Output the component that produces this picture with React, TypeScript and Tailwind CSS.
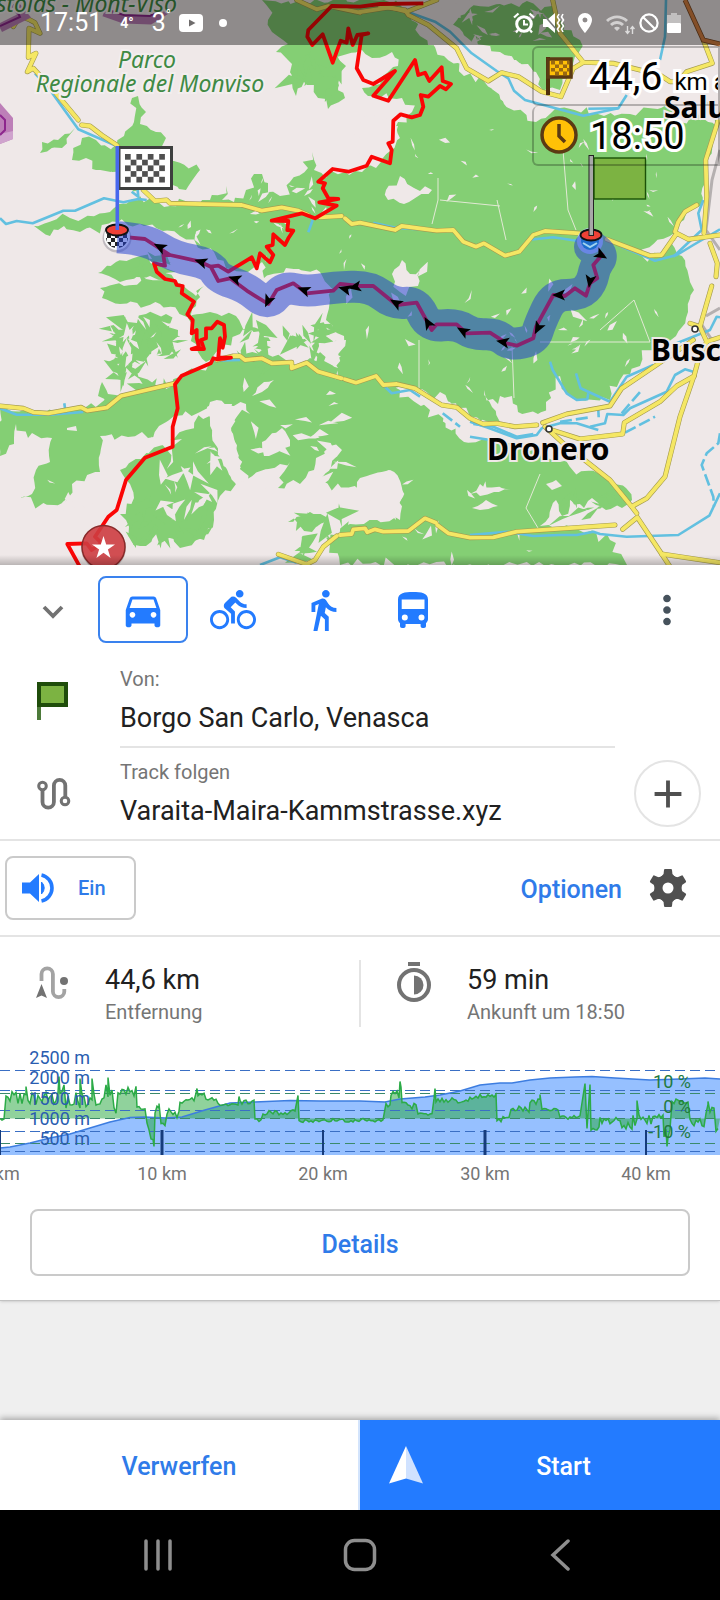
import React from "react";
import {
  MdAdd,
  MdDirectionsBike,
  MdDirectionsCar,
  MdDirectionsWalk,
  MdLocationOn,
  MdMoreVert,
  MdWifi,
} from "react-icons/md";

/* ---------- map geometry ---------- */

type Sheet = [number, number];
const NW: Sheet = [0, 0];
const NE: Sheet = [360, 0];
const SW: Sheet = [0, 280];
const SE: Sheet = [360, 280];

/** Converts survey units (three per map unit) of one sheet into map points. */
function points([ox, oy]: Sheet, c: number[]): [number, number][] {
  const out: [number, number][] = [];
  for (let i = 0; i < c.length; i += 2) out.push([ox + c[i] / 3, oy + c[i + 1] / 3]);
  return out;
}

function line(sheet: Sheet, c: number[]): string {
  return points(sheet, c).map(([x, y]) => `${x.toFixed(1)},${y.toFixed(1)}`).join(" ");
}

/** Path through the midpoints of a polyline, rounded at each corner. */
function smooth(sheet: Sheet, c: number[]): string {
  const p = points(sheet, c);
  let d = `M${p[0][0]} ${p[0][1]}`;
  for (let i = 1; i < p.length - 1; i++) {
    const mx = (p[i][0] + p[i + 1][0]) / 2;
    const my = (p[i][1] + p[i + 1][1]) / 2;
    d += `Q${p[i][0].toFixed(1)} ${p[i][1].toFixed(1)} ${mx.toFixed(1)} ${my.toFixed(1)}`;
  }
  const last = p[p.length - 1];
  return `${d}L${last[0]} ${last[1]}`;
}

function random(seed: number) {
  let s = seed;
  return () => {
    s = (s * 1664525 + 1013904223) % 4294967296;
    return s / 4294967296;
  };
}

/** Roughens the outline of a wood with uneven spikes. */
function ragged(c: number[], seed: number, amp = 5): string {
  const r = random(seed);
  const out: string[] = [];
  const n = c.length / 2;
  for (let i = 0; i < n; i++) {
    const x0 = c[i * 2];
    const y0 = c[i * 2 + 1];
    const x1 = c[((i + 1) % n) * 2];
    const y1 = c[((i + 1) % n) * 2 + 1];
    const len = Math.hypot(x1 - x0, y1 - y0);
    const steps = Math.max(1, Math.round(len / 6));
    for (let k = 0; k < steps; k++) {
      const t = (k + (k ? (r() - 0.5) * 0.8 : 0)) / steps;
      const spike = r() > 0.75 ? 1.9 : 0.8;
      const d = k === 0 ? 0 : (r() - 0.5) * 2 * amp * spike;
      const nx = len ? -(y1 - y0) / len : 0;
      const ny = len ? (x1 - x0) / len : 0;
      out.push(`${(x0 + (x1 - x0) * t + nx * d).toFixed(1)},${(y0 + (y1 - y0) * t + ny * d).toFixed(1)}`);
    }
  }
  return out.join(" ");
}

/** Narrow angular slivers scattered over a rectangle. */
function shards(x: number, y: number, w: number, h: number, n: number, size: number, seed: number): string {
  const r = random(seed);
  let d = "";
  for (let i = 0; i < n; i++) {
    const cx = x + r() * w;
    const cy = y + r() * h;
    const a = r() * Math.PI * 2;
    const l = size * (0.6 + r() * 1.3);
    const s = l * (0.15 + r() * 0.4);
    const p = (ang: number, rad: number) =>
      `${(cx + Math.cos(a + ang) * rad).toFixed(1)} ${(cy + Math.sin(a + ang) * rad).toFixed(1)}`;
    d += `M${p(0, l)}L${p(1.2 + r(), s)}L${p(3 + r() * 0.7, l * 0.8)}L${p(4.4, s * 0.5)}Z`;
  }
  return d;
}

const woods: number[][] = [
  [262, 0, 268, 20, 272, 32, 288, 44, 276, 52, 292, 64, 296, 96, 304, 82, 318, 98, 328, 109, 345, 98, 338, 84, 346, 66, 330, 56, 362, 50, 372, 58, 392, 52, 398, 66, 380, 84, 362, 88, 368, 96, 402, 98, 412, 112, 398, 122, 400, 138, 378, 160, 362, 172, 345, 172, 326, 178, 314, 170, 312, 152, 308, 168, 290, 182, 280, 196, 268, 192, 262, 174, 254, 174, 246, 190, 234, 202, 222, 200, 226, 186, 210, 200, 170, 206, 140, 196, 110, 212, 70, 218, 34, 226, 50, 236, 64, 226, 80, 232, 118, 222, 140, 224, 180, 236, 214, 252, 226, 268, 248, 272, 262, 262, 264, 278, 286, 268, 320, 272, 330, 300, 326, 320, 344, 336, 330, 346, 338, 368, 310, 358, 290, 362, 262, 350, 236, 358, 214, 358, 182, 376, 172, 386, 120, 396, 80, 410, 30, 412, 0, 408, 0, 456, 14, 444, 16, 424, 28, 438, 52, 438, 50, 462, 36, 470, 32, 494, 20, 498, 54, 505, 68, 498, 72, 484, 100, 472, 100, 436, 128, 437, 142, 432, 148, 438, 174, 416, 200, 412, 210, 402, 246, 404, 250, 414, 232, 424, 236, 448, 242, 480, 280, 464, 290, 462, 278, 488, 300, 484, 314, 470, 330, 446, 342, 450, 320, 480, 360, 490, 384, 484, 388, 470, 402, 490, 400, 520, 350, 524, 330, 544, 340, 565, 627, 565, 610, 540, 596, 532, 540, 526, 556, 500, 562, 516, 570, 498, 584, 508, 592, 498, 606, 510, 622, 508, 632, 500, 626, 488, 600, 474, 560, 462, 524, 444, 486, 438, 464, 440, 430, 410, 400, 390, 380, 384, 440, 392, 480, 420, 500, 424, 506, 400, 514, 424, 538, 424, 546, 402, 560, 376, 572, 398, 610, 400, 620, 380, 640, 366, 654, 344, 676, 336, 688, 312, 694, 290, 690, 282, 682, 256, 672, 244, 660, 256, 640, 254, 670, 236, 684, 220, 702, 206, 704, 176, 712, 140, 716, 126, 690, 118, 676, 124, 668, 104, 648, 108, 630, 114, 604, 116, 560, 108, 536, 122, 504, 104, 486, 82, 464, 76, 444, 56, 420, 36, 408, 12, 384, 0],
  [452, 26, 470, 8, 500, 4, 552, 6, 560, 20, 580, 40, 572, 72, 560, 90, 540, 92, 528, 64, 516, 60, 500, 56, 482, 58, 466, 44],
  [112, 148, 124, 136, 134, 122, 132, 98, 138, 96, 146, 112, 140, 124, 156, 132, 166, 138, 162, 158, 200, 170, 186, 190, 170, 184, 140, 190, 112, 172],
  [40, 153, 42, 142, 58, 140, 75, 128, 62, 148],
  [72, 160, 82, 138, 96, 140, 112, 150, 116, 170, 96, 170, 86, 158],
  [100, 288, 124, 286, 142, 280, 170, 280, 196, 296, 204, 286, 196, 306, 190, 318, 160, 304, 120, 304, 102, 298],
  [98, 273, 116, 262, 140, 256, 158, 266, 176, 282, 150, 276, 120, 282],
  [128, 322, 146, 314, 166, 314, 178, 330, 172, 346, 178, 358, 150, 354, 132, 364, 108, 362, 118, 350, 112, 336, 128, 334],
  [188, 318, 210, 312, 236, 316, 240, 334, 222, 344, 206, 362, 196, 344],
  [98, 396, 102, 382, 108, 394, 120, 396, 108, 406],
  [120, 470, 170, 440, 186, 430, 214, 412, 212, 436, 224, 464, 236, 484, 220, 496, 214, 520, 204, 540, 180, 548, 160, 530, 146, 546, 132, 540, 126, 520, 120, 514, 134, 498, 130, 484],
  [288, 522, 310, 512, 328, 518, 312, 532],
];

const roads: string[] = [
  line(NW, [40, 80, 60, 48, 90, 60, 105, 68, 120, 100, 87, 85, 85, 172, 108, 160, 82, 215, 100, 205, 160, 270, 235, 360]),
  line(NW, [245, 375, 270, 378, 305, 405, 350, 435, 400, 510, 430, 570, 465, 603, 500, 600, 510, 610, 725, 615, 785, 632, 845, 622, 895, 632, 925, 645]),
  line(NW, [960, 652, 1025, 648]),
  line(NW, [1035, 655, 1055, 672, 1080, 668, 1185, 690, 1205, 678, 1310, 692, 1360, 690, 1390, 725, 1428, 740, 1452, 730, 1515, 767, 1558, 755, 1600, 705, 1635, 693, 1740, 700]),
  line(NW, [890, 0, 950, 28, 985, 18, 1080, 38]),
  line(NE, [0, 36, 90, 22, 140, 35, 230, 0]),
  line(NE, [60, 20, 135, 30, 145, 45, 205, 75, 290, 145, 320, 205, 385, 243, 425, 218, 475, 230, 545, 275, 603, 290, 640, 205, 670, 187]),
  line(NE, [578, 0, 600, 100, 670, 187, 760, 190, 900, 225, 930, 245, 955, 245, 980, 215, 1057, 190, 1030, 120]),
  line(NE, [740, 718, 870, 767, 905, 765, 950, 700, 985, 718, 1080, 705]),
  line(NE, [945, 695, 955, 665, 975, 635, 1010, 615]),
  line(NE, [1075, 360, 1037, 480, 1040, 590, 1032, 700]),
  line(NE, [1050, 730, 1072, 790, 1068, 830]),
  line(SW, [0, 378, 70, 385, 100, 397, 145, 400, 243, 382, 262, 392, 320, 383, 363, 348, 525, 310]),
  line(SW, [650, 240, 700, 228, 720, 228, 735, 240, 785, 235, 815, 250, 875, 247, 875, 265, 920, 248, 955, 275, 1025, 295]),
  line(SW, [1035, 298, 1068, 308, 1128, 288, 1150, 315, 1190, 312, 1245, 325, 1325, 375, 1370, 382, 1410, 415, 1450, 432, 1490, 430, 1545, 440, 1610, 435]),
  line(SW, [835, 823, 920, 853, 945, 840, 970, 800, 1010, 768]),
  line(SW, [1020, 765, 1055, 762, 1060, 748, 1095, 745, 1102, 757, 1125, 748, 1150, 755, 1225, 753, 1275, 715, 1308, 728]),
  line(SE, [548, 428, 620, 402, 750, 378, 785, 325, 885, 258, 1000, 180]),
  line(SE, [555, 440, 610, 490, 750, 600, 815, 680, 830, 700]),
  line(SE, [560, 445, 660, 477, 788, 462, 793, 428, 900, 365, 950, 318, 1003, 288]),
  line(SE, [1055, 18, 1020, 140, 1040, 185, 1015, 240, 1003, 285, 960, 410, 915, 590, 860, 655, 820, 677]),
  line(SE, [1040, 185, 1080, 172]),
  line(SE, [990, 130, 1020, 140]),
  line(SE, [232, 735, 265, 760, 330, 773, 400, 772, 470, 755, 765, 735]),
  line(SE, [788, 748, 832, 712, 905, 822, 930, 860]),
  line(SE, [905, 822, 1080, 848]),
];

const rivers: string[] = [
  line(NW, [0, 655, 18, 672, 50, 663, 98, 670, 190, 632, 225, 632, 312, 595, 370, 607, 415, 597, 440, 600]),
  line(NW, [395, 575, 415, 590, 412, 560]),
  line(NW, [105, 220, 150, 270, 235, 388, 350, 438]),
  line(NW, [925, 697, 938, 660]),
  line(NE, [150, 38, 225, 65, 270, 95, 335, 160, 410, 213, 445, 235, 462, 272, 495, 300, 670, 347, 775, 325, 800, 285]),
  line(NE, [685, 326, 775, 325]),
  line(NE, [918, 0, 915, 110, 900, 180]),
  line(NE, [500, 720, 580, 712, 650, 722]),
  line(NE, [785, 740, 885, 782, 950, 765, 1000, 735, 1080, 688]),
  line(NE, [940, 770, 1025, 690, 1015, 640, 1030, 600]),
  line(NE, [40, 668, 110, 684, 210, 690]),
  line(SW, [0, 385, 50, 404, 150, 404, 250, 396]),
  line(SW, [193, 370, 195, 385]),
  line(SW, [640, 242, 720, 240]),
  line(SW, [780, 855, 840, 832, 890, 848]),
  line(SE, [570, 245, 578, 270, 620, 340, 650, 360, 682, 358, 685, 340]),
  line(SE, [648, 280, 662, 325, 750, 365, 800, 290, 880, 255]),
  line(SE, [690, 440, 735, 430, 742, 402, 790, 405, 810, 385, 920, 335, 945, 285, 975, 268, 1000, 275]),
  line(SE, [330, 425, 380, 442, 470, 475, 530, 465, 545, 445, 600, 430, 650, 430, 715, 450]),
  line(SE, [340, 432, 400, 440, 470, 470, 520, 462]),
  line(SE, [330, 470, 390, 480]),
  line(SE, [75, 320, 95, 340, 150, 330, 180, 350]),
  line(SE, [330, 765, 440, 755, 520, 768, 600, 765, 650, 765, 700, 755, 720, 762, 800, 770, 955, 765, 1048, 707, 1080, 640]),
  line(SE, [950, 190, 1050, 150, 1070, 110, 1080, 112]),
];

const dashedRivers: string[] = [
  line(SE, [1080, 460, 1075, 490, 1040, 520, 1025, 555, 1060, 650, 1062, 680]),
  line(SE, [600, 425, 690, 412]),
  line(SE, [785, 400, 845, 330]),
  line(SE, [795, 458, 885, 410]),
  line(SE, [248, 400, 300, 440]),
  line(SE, [715, 390, 716, 412]),
];

const trackNorth = line(NW, [
  1270, 10, 1140, 12, 1080, 20, 995, 18, 925, 90, 922, 110, 937, 135, 968, 103, 998, 188, 1022, 122, 1040, 128, 1045, 85,
  1058, 135, 1072, 105, 1105, 100, 1085, 105, 1070, 205, 1090, 240, 1120, 252, 1185, 213, 1120, 287, 1165, 302, 1245, 180, 1255,
  225, 1275, 218, 1288, 243, 1325, 202, 1328, 243, 1353, 252, 1338, 268, 1320, 258, 1285, 290, 1262, 285, 1270, 320, 1260,
  345, 1235, 352, 1202, 343, 1180, 362, 1178, 425, 1165, 430, 1175, 450, 1170, 490, 1115, 470, 1100, 497, 1045, 515, 998,
  507, 955, 545, 975, 550, 968, 565, 985, 595, 1015, 597, 958, 607, 1010, 617, 945, 655, 905, 640, 815, 662, 865, 663,
  862, 690, 880, 692, 865, 715, 855, 735, 820, 703, 818, 735, 800, 740, 820, 765, 810, 787, 780, 760, 770, 805, 755, 772,
  685, 815, 655, 797, 632, 800,
]);

const trackSouth = line(SW, [
  510, -75, 490, -75, 495, -43, 462, -50, 470, -25, 495, -3, 525, 3, 530, 15, 548, 18, 545, 40, 582, 65, 562, 103, 578,
  120, 575, 160, 590, 150, 590, 175, 597, 200, 575, 207, 612, 207, 603, 180, 618, 175, 618, 145, 635, 145, 652, 125, 672,
  135, 675, 170, 668, 203, 660, 175, 655, 232, 693, 233, 650, 238, 640, 235, 632, 250, 545, 287, 525, 313, 533, 385, 518,
  440, 518, 500, 435, 533, 378, 600, 350, 690, 325, 710, 285, 770, 305, 790, 275, 810, 260, 790, 202, 792, 242, 865,
]);

const route = line(NW, [
  352, 712, 385, 712, 435, 717, 510, 765, 600, 785, 632, 800, 655, 843, 690, 835, 735, 868, 745, 875, 805, 912, 830, 870,
  880, 850, 920, 880, 1000, 872, 1020, 852, 1080, 858, 1120, 858, 1190, 915, 1250, 908, 1295, 990, 1310, 973, 1370, 973,
  1400, 1000, 1470, 998, 1520, 1030, 1550, 1037, 1600, 1015, 1608, 980, 1660, 885, 1695, 888, 1725, 865, 1758, 887, 1770,
  850, 1792, 835, 1780, 795, 1810, 760,
]);

const corridor = smooth(NW, [
  352, 712, 435, 716, 520, 770, 632, 792, 655, 835, 735, 860, 805, 918, 850, 860, 920, 875, 1000, 862, 1110, 858, 1180, 912, 1250,
  905, 1285, 980, 1370, 972, 1420, 1004, 1490, 1002, 1530, 1036, 1605, 1020, 1620, 970, 1660, 885, 1740, 885, 1775, 850, 1785,
  800, 1810, 765, 1770, 735,
]);

const arrows: [number, number, number][] = [
  [160, 247, 28], [201, 262, 18], [235, 279, 18], [268, 301, -65], [304, 290, 20], [345, 289, 15], [355, 287, -10], [396, 303, 30],
  [428, 323, 60], [463, 331, 30], [503, 342, 10], [538, 328, -62], [559, 295, 0], [590, 281, -80], [601, 255, -150],
];

function MapLabel({ x, y, children }: { x: number; y: number; children: string }) {
  return (
    <text
      x={x}
      y={y}
      className="fill-black stroke-[#efe8e8] font-['Noto_Sans',sans-serif] text-[30px] font-bold [paint-order:stroke] [stroke-width:4px]"
    >
      {children}
    </text>
  );
}

function ParkLabel({ x, y, anchor = "middle", children }: { x: number; y: number; anchor?: "middle" | "end"; children: string }) {
  return (
    <text
      x={x}
      y={y}
      textAnchor={anchor}
      className="fill-[#3f8a44] stroke-[#f3eeee] font-['Noto_Sans',sans-serif] text-[23px] italic [paint-order:stroke] [stroke-width:4px]"
    >
      {children}
    </text>
  );
}

const checks = [0, 1, 2, 3, 4].flatMap((row) =>
  [0, 1, 2, 3, 4, 5, 6].filter((col) => (row + col) % 2 === 0).map((col) => [col, row] as const),
);

function RouteMap() {
  return (
    <svg viewBox="0 0 720 565" className="block h-auto w-full" role="img" aria-label="Karte">
      <defs>
        <linearGradient id="edge" x1="0" y1="0" x2="0" y2="1">
          <stop offset="0" stopColor="#000" stopOpacity="0" />
          <stop offset="1" stopColor="#000" stopOpacity="0.22" />
        </linearGradient>
        <clipPath id="finish-disc">
          <circle cx="117" cy="237" r="11" />
        </clipPath>
      </defs>
      <rect width="720" height="565" fill="#efe8e8" />

      <g fill="#84cf74">
        {woods.map((w, i) => (
          <polygon key={i} points={ragged(w, 11 + i * 7, i === 0 ? 4 : 3)} />
        ))}
        <path d={shards(105, 318, 75, 70, 34, 10, 5)} />
        <path d={shards(240, 325, 28, 45, 16, 9, 9)} />
        <path d={shards(285, 325, 50, 35, 18, 10, 12)} />
        <path d={shards(125, 505, 85, 35, 24, 11, 14)} />
        <path d={shards(295, 510, 55, 50, 14, 11, 17)} />
        <path d={shards(290, 60, 50, 36, 14, 10, 21)} />
        <path d={shards(560, 490, 60, 30, 14, 8, 23)} />
        <path d={shards(120, 255, 60, 25, 10, 8, 25)} />
        <path d={shards(690, 100, 26, 26, 10, 6, 26)} />
      </g>

      <g fill="#efe8e8">
        <polygon points={ragged([360, 128, 376, 110, 398, 126, 392, 150, 376, 168, 360, 158], 41)} />
        <polygon points={ragged([386, 190, 400, 176, 414, 188, 432, 190, 404, 204, 388, 200], 43, 3)} />
        <polygon points={ragged([392, 274, 402, 260, 410, 274, 420, 270, 418, 286, 400, 292], 45, 3)} />
        <polygon points={ragged([404, 12, 440, 8, 470, 0, 452, 24, 470, 40, 500, 52, 536, 72, 540, 112, 504, 102, 480, 74, 452, 62, 430, 36], 47, 3)} />
        <polygon points={ragged([360, 478, 390, 470, 402, 488, 396, 520, 380, 512, 360, 500], 49)} />
        <polygon points={ragged([262, 442, 282, 428, 290, 440, 278, 452, 264, 456], 53, 3)} />
        <polygon points={ragged([252, 396, 264, 382, 274, 380, 262, 392], 55, 2)} />
        <polygon points={ragged([470, 494, 480, 484, 510, 490, 494, 492, 480, 496], 57, 2)} />
        <polygon points={ragged([472, 508, 486, 500, 498, 506, 480, 510], 59, 2)} />
        <polygon points={ragged([546, 484, 556, 480, 562, 486, 552, 490], 61, 1)} />
        <polygon points={ragged([484, 390, 498, 404, 500, 396, 512, 396, 518, 412, 538, 414, 545, 436, 490, 440, 464, 442, 440, 410, 420, 396, 450, 402, 476, 424, 500, 422], 63, 3)} />
        <polygon points={ragged([207, 407, 232, 404, 234, 440, 248, 480, 236, 484, 222, 460, 212, 430], 65, 3)} />
        <polygon points={ragged([330, 344, 346, 340, 336, 366, 320, 352], 67, 3)} />
        <path d={shards(410, 90, 250, 120, 22, 4, 71)} />
        <path d={shards(400, 300, 260, 90, 30, 4, 73)} />
        <path d={shards(240, 375, 110, 110, 22, 8, 77)} />
        <path d={shards(180, 205, 200, 60, 18, 4, 79)} />
        <path d={shards(400, 470, 140, 90, 10, 5, 81)} />
        <path d={shards(150, 440, 70, 90, 24, 9, 83)} />
        <path d={shards(440, 10, 110, 35, 20, 6, 87)} />
        <path d={shards(110, 320, 60, 40, 18, 6, 89)} />
        <path d={shards(250, 170, 80, 35, 12, 5, 91)} />
        <path d={shards(345, 265, 240, 80, 12, 6, 92)} />
        <path d={shards(50, 480, 50, 25, 7, 6, 95)} />
        <path d={shards(640, 170, 60, 60, 9, 4, 97)} />
        <polygon points="67,428 76,426 77,431 67,430" />
      </g>
      <g fill="none" stroke="#e2e9d4" strokeWidth="1">
        <polyline points="438,178 438,200 432,224" />
        <polyline points="563,150 568,210 576,230" />
        <polyline points="497,200 506,240" />
        <polyline points="419,340 419,388" />
        <polyline points="512,346 514,398" />
        <polyline points="540,342 650,342" />
        <polyline points="440,200 500,206" />
        <polyline points="600,330 634,300 650,342" />
        <polyline points="540,474 526,508 538,528" />
      </g>

      <g fill="none" stroke="#b5b0b0" strokeWidth="3">
        <polyline points="720,150 712,180 706,230 720,250" />
        <polyline points="706,316 720,308" />
        <polyline points="700,322 712,340" />
      </g>
      <g fill="none" stroke="#62c0e0" strokeWidth="2.6" strokeLinejoin="round">
        {rivers.map((p, i) => (
          <polyline key={i} points={p} />
        ))}
        {dashedRivers.map((p, i) => (
          <polyline key={i} points={p} strokeDasharray="12 4" />
        ))}
      </g>
      <g fill="none" stroke="#a39a4e" strokeWidth="5" strokeLinejoin="round" strokeLinecap="round">
        {roads.map((p, i) => (
          <polyline key={i} points={p} />
        ))}
      </g>
      <g fill="none" stroke="#f5e764" strokeWidth="3.8" strokeLinejoin="round" strokeLinecap="round">
        {roads.map((p, i) => (
          <polyline key={i} points={p} />
        ))}
      </g>
      <polyline points={line(NE, [975, 0, 1030, 120, 1080, 132])} fill="none" stroke="#7b4a24" strokeWidth="5" />
      <polyline points={line(NE, [975, 0, 1030, 120, 1080, 132])} fill="none" stroke="#dd8444" strokeWidth="3.4" />

      <polygon points="0,103 13,118 13,139 0,144" fill="#bd7fb8" />
      <polygon points="0,134 13,131 13,139 0,144" fill="#cfa3cd" />
      <polyline points="0,115 5,120 5,130 0,135" fill="none" stroke="#8d278d" strokeWidth="2" />
      <polyline points="0,28 24,16 14,4" fill="none" stroke="#bd7fb8" strokeWidth="9" />
      <polyline points="0,26 20,17 14,4" fill="none" stroke="#8d278d" strokeWidth="2" />
      <polyline points="104,12 124,19 150,20 166,10" fill="none" stroke="#bd7fb8" strokeWidth="9" />
      <polyline points="104,9 124,15 150,16 164,8" fill="none" stroke="#8d278d" strokeWidth="2" />

      <ParkLabel x={177} y={12} anchor="end">Ristolas - Mont-Viso</ParkLabel>
      <ParkLabel x={147} y={68}>Parco</ParkLabel>
      <ParkLabel x={150} y={92}>Regionale del Monviso</ParkLabel>
      <MapLabel x={664} y={118}>Saluzzo</MapLabel>
      <MapLabel x={651} y={361}>Busca</MapLabel>
      <MapLabel x={487} y={460}>Dronero</MapLabel>
      <circle cx="695" cy="329" r="3" fill="#fff" stroke="#333" strokeWidth="1.6" />
      <circle cx="549" cy="429" r="3" fill="#fff" stroke="#333" strokeWidth="1.6" />

      <g fill="none" stroke="#fb0505" strokeWidth="3.8" strokeLinejoin="round">
        <polyline points={trackNorth} />
        <polyline points={trackSouth} />
        <polyline points={route} />
      </g>

      <circle cx="117" cy="238" r="14.500" fill="#6a6575" opacity="0.35" />
      <circle cx="117" cy="237" r="13" fill="#fafafa" />
      <g fill="#222" clipPath="url(#finish-disc)">
        {checks.map(([c, r]) => (
          <rect key={`${c}-${r}`} x={103 + c * 4} y={230 + r * 4} width="4" height="4" />
        ))}
      </g>
      <circle cx="590" cy="241" r="13" fill="#b9d4fa" />
      <circle cx="590" cy="241" r="9" fill="#19a0c8" />
      <g opacity="0.52" fill="none" stroke="#213fd1">
        <path d={corridor} strokeWidth="32" strokeLinejoin="round" strokeLinecap="butt" />
        <circle cx="590" cy="247" r="8" strokeWidth="16" />
      </g>
      {arrows.map(([x, y, a]) => (
        <path key={`${x}-${y}`} d="M-7 0L6 -5.500L3 0L6 5.500Z" transform={`translate(${x} ${y}) rotate(${a})`} />
      ))}

      <path d="M583 243l7 4 7-4" fill="none" stroke="#9fd3f0" strokeWidth="2" />
      <ellipse cx="591" cy="235" rx="10.500" ry="5.500" fill="#ee4136" stroke="#111" strokeWidth="1.800" />
      <rect x="589" y="155.500" width="4.500" height="80" fill="#a8a8a8" stroke="#222" strokeWidth="1" />
      <rect x="594" y="158" width="51.500" height="41" fill="#7cb342" stroke="#1b5208" strokeWidth="1.400" />

      <ellipse cx="117" cy="230" rx="11" ry="5.500" fill="#ee4136" stroke="#111" strokeWidth="1.800" />
      <rect x="119" y="147.500" width="52.500" height="41" fill="#fff" stroke="#3d3f3e" strokeWidth="3" />
      <g fill="#505050">
        {checks.map(([c, r]) => (
          <rect key={`${c}-${r}`} x={125 + c * 5.7} y={154 + r * 5.7} width="5.700" height="5.700" />
        ))}
      </g>
      <rect x="115.500" y="146" width="3.600" height="84" fill="#4868ee" />

      <circle cx="103.500" cy="548" r="22.500" fill="#000" opacity="0.18" />
      <circle cx="103.500" cy="547" r="21.500" fill="#d33f43" fillOpacity="0.88" stroke="#8a2a2a" strokeWidth="1.500" />
      <path d="M103.500 536l2.700 8.400h8.800l-7.100 5.200 2.700 8.400-7.100-5.200-7.100 5.200 2.700-8.400-7.100-5.200h8.800z" fill="#fff" />
      <rect y="555" width="720" height="10" fill="url(#edge)" />
    </svg>
  );
}

/* ---------- overlays ---------- */

function StatusBar() {
  return (
    <div className="absolute inset-x-0 top-0 flex h-[45px] items-center bg-black/40 pr-[39px] pl-10 text-white">
      <span className="text-[25px]">17:51</span>
      <span className="ml-[18px] text-sm font-bold">4°</span>
      <span className="ml-[18px] flex items-start text-[25px] leading-7">
        3<span className="text-sm leading-3">°</span>
      </span>
      <svg viewBox="0 0 24 18" className="ml-2 h-[18px] w-6" aria-hidden="true">
        <rect width="24" height="18" rx="4" fill="#fff" />
        <path d="M10 5.500l6.500 3.500L10 12.500z" fill="#6f6c6c" />
      </svg>
      <span className="ml-4 size-2 rounded-full bg-white" />
      <div className="ml-auto flex items-center gap-2">
        <svg viewBox="0 0 22 22" className="size-[22px]" fill="none" stroke="#fff" aria-hidden="true">
          <circle cx="11" cy="12" r="7.300" strokeWidth="3" />
          <path d="M11 8v4.500h4" strokeWidth="2" />
          <path d="M1 5.500l4.500-4M21 5.500l-4.500-4" strokeWidth="2.200" />
          <path d="M5 18l-2 2.500M17 18l2 2.500" strokeWidth="2.200" />
        </svg>
        <svg viewBox="0 0 22 20" className="h-5 w-[22px]" aria-hidden="true">
          <path d="M0 6h5l7-6v20l-7-6H0z" fill="#fff" />
          <path d="M0 1l14 16" stroke="#777" strokeWidth="1.500" />
          <path d="M16 1l-1.500 3 2 3-2 3 2 3-2 3 1.500 3M20 1l-1.500 3 2 3-2 3 2 3-2 3 1.500 3" fill="none" stroke="#fff" strokeWidth="1.600" />
        </svg>
        <MdLocationOn className="size-6" />
        <span className="flex items-end">
          <MdWifi className="size-6 opacity-60" />
          <svg viewBox="0 0 10 10" className="-ml-1 size-2.5 opacity-70" aria-hidden="true">
            <path d="M2.500 1v7M.5 6l2 2.500 2-2.500M7.500 9V2M5.500 4l2-2.500 2 2.500" fill="none" stroke="#fff" strokeWidth="1.400" />
          </svg>
        </span>
        <svg viewBox="0 0 20 20" className="-ml-1 size-5" fill="none" stroke="#fff" strokeWidth="2.200" aria-hidden="true">
          <circle cx="10" cy="10" r="8.600" />
          <path d="M4 4l12 12" />
        </svg>
        <svg viewBox="0 0 14 20" className="h-5 w-3.5" aria-hidden="true">
          <path d="M4 0h6v2h4v8H0V2h4z" fill="#fff" opacity=".45" />
          <rect y="10" width="14" height="10" rx="1" fill="#fff" />
        </svg>
      </div>
    </div>
  );
}

const halo = "[paint-order:stroke] [-webkit-text-stroke:6px_#fff]";

function Hud() {
  return (
    <div className="absolute top-[46px] right-0 w-[188px] text-black">
      <div className="flex h-[60px] items-center overflow-hidden rounded-l-md border-2 border-black/25 pl-3">
        <svg viewBox="0 0 27 38" className="h-[38px] w-[27px] shrink-0" aria-hidden="true">
          <path d="M2 0v38" stroke="#4e2f0c" strokeWidth="4" />
          <rect x="2" y="2" width="23" height="18" fill="#ffc107" stroke="#5b3a13" strokeWidth="3.500" />
          <path d="M5 4h4v3.500H5zM13 4h4v3.500h-4zM21 4h2v3.500h-2zM9 7.500h4V11H9zM17 7.500h4V11h-4zM5 11h4v3.500H5zM13 11h4v3.500h-4zM21 11h2v3.500h-2zM9 14.500h4V18H9zM17 14.500h4V18h-4z" fill="#9a6a12" />
        </svg>
        <span className={`mt-0.5 ml-4 text-[39px] ${halo}`}>44,6</span>
        <span className={`mt-3 ml-3 text-2xl ${halo}`}>km</span>
        <span className={`mt-3 ml-1.5 text-2xl ${halo}`}>a</span>
      </div>
      <div className="flex h-[60px] items-center overflow-hidden rounded-l-md border-2 border-t-0 border-black/25 pl-1.5">
        <svg viewBox="0 0 38 38" className="size-[38px] shrink-0" aria-hidden="true">
          <circle cx="19" cy="19" r="17" fill="#ffc107" stroke="#5b3a13" strokeWidth="3.500" />
          <path d="M19 8v12l6 6" fill="none" stroke="#5b3a13" strokeWidth="3.500" />
        </svg>
        <span className={`mt-0.5 ml-3 text-[38px] ${halo}`}>18:50</span>
      </div>
    </div>
  );
}

/* ---------- route sheet ---------- */

function BusIcon() {
  return (
    <svg viewBox="0 0 30 36" className="h-9 w-[30px]" fill="currentColor" aria-hidden="true">
      <path
        fillRule="evenodd"
        d="M15 0C7 0 0 .8 0 7.500V27c0 1.700.8 3.200 2 4.200V34c0 1.200.8 2 2 2h1.600c1.200 0 2-.8 2-2v-2h15v2c0 1.200.8 2 2 2H26c1.200 0 2-.8 2-2v-2.800c1.200-1 2-2.500 2-4.200V7.500C30 .8 23 0 15 0zM3.700 7.500h22.800V17H3.700zM6.800 22.500a3 3 0 1 1 0 6 3 3 0 0 1 0-6zM23.500 22.500a3 3 0 1 1 0 6 3 3 0 0 1 0-6z"
      />
    </svg>
  );
}

function GearIcon() {
  return (
    <svg viewBox="-20 -20 40 40" className="size-10" aria-hidden="true">
      <g fill="#505050" stroke="#505050" strokeWidth="2" strokeLinejoin="round">
        <circle r="12.500" />
        {[0, 60, 120, 180, 240, 300].map((a) => (
          <path key={a} d="M-6.500 -10L-3.500 -13.500L-3 -18H3L3.500 -13.500L6.500 -10Z" transform={`rotate(${a})`} />
        ))}
      </g>
      <circle r="5.500" fill="#fff" />
    </svg>
  );
}

function ModeRow() {
  const mode = "flex h-[67px] w-[90px] items-center justify-center";
  return (
    <div className="flex items-center pt-[11px] text-[#237bff]">
      <button aria-label="Einklappen" className="flex w-[98px] justify-center pt-1 pl-[7px]">
        <svg viewBox="0 0 22 14" className="h-3.5 w-[22px]" fill="none" stroke="#727272" strokeWidth="3.800" aria-hidden="true">
          <path d="M2 2l9 9 9-9" />
        </svg>
      </button>
      <button aria-label="Auto" aria-pressed="true" className={`${mode} rounded-lg border-2 border-[#3a82ee]`}>
        <MdDirectionsCar className="size-[46px]" />
      </button>
      <button aria-label="Fahrrad" className={mode}>
        <MdDirectionsBike className="size-[46px]" />
      </button>
      <button aria-label="Zu Fuß" className={mode}>
        <MdDirectionsWalk className="size-[46px]" />
      </button>
      <button aria-label="Bus" className={mode}>
        <BusIcon />
      </button>
      <button aria-label="Mehr" className="mr-[30px] ml-auto text-[#46525c]">
        <MdMoreVert className="size-[46px]" />
      </button>
    </div>
  );
}

function FlagIcon() {
  return (
    <svg viewBox="0 0 31 38" className="h-[38px] w-[31px]" aria-hidden="true">
      <path d="M2 22v16" stroke="#4d7a3a" strokeWidth="4" />
      <rect x="2" y="2" width="27" height="21" fill="#7cb342" stroke="#1f4d0b" strokeWidth="4" />
    </svg>
  );
}

function TrackIcon() {
  return (
    <svg viewBox="0 0 34 34" className="size-[34px]" fill="none" stroke="#727272" aria-hidden="true">
      <circle cx="5.500" cy="9" r="3.800" strokeWidth="3" />
      <circle cx="28" cy="24" r="3.800" strokeWidth="3" />
      <path d="M5.500 12.500V25a5.700 5.700 0 0 0 11.400 0V8.500a5.700 5.700 0 0 1 11.400 0V20" strokeWidth="3.800" />
    </svg>
  );
}

function Waypoint({ icon, label, value }: { icon: React.ReactNode; label: string; value: string }) {
  return (
    <div className="flex">
      <div className="flex w-[120px] items-center pl-[37px]">{icon}</div>
      <div className="pt-3">
        <div className="text-xl leading-6 text-[#757575]">{label}</div>
        <div className="mt-[9px] pb-2.5 text-[27px] leading-9 text-[#212121]">{value}</div>
      </div>
    </div>
  );
}

function Waypoints() {
  return (
    <div className="border-b-2 border-[#e4e4e4]">
      <Waypoint icon={<FlagIcon />} label="Von:" value="Borgo San Carlo, Venasca" />
      <div className="mr-[105px] ml-[120px] border-t-2 border-[#e4e4e4]" />
      <div className="flex items-center justify-between pr-[19px]">
        <Waypoint icon={<TrackIcon />} label="Track folgen" value="Varaita-Maira-Kammstrasse.xyz" />
        <button
          aria-label="Zwischenziel hinzufügen"
          className="flex size-[67px] items-center justify-center rounded-full border-2 border-[#e4e4e4] text-[#505050]"
        >
          <MdAdd className="size-[46px]" />
        </button>
      </div>
    </div>
  );
}

function OptionsRow() {
  return (
    <div className="flex h-24 items-center border-b-2 border-[#e4e4e4] pr-8 pl-[5px] text-[#2f7be9]">
      <button className="flex h-16 w-[131px] items-center rounded-lg border-2 border-[#cacaca] pl-[15px] text-xl font-medium">
        <svg viewBox="0 0 34 32" className="mr-[22px] h-8 w-[34px]" aria-hidden="true">
          <path d="M0 10.500h8L17 2v28l-9-8.500H0z" fill="#237bff" />
          <path d="M19.500 10a8 8 0 0 1 0 12z" fill="#237bff" stroke="#237bff" />
          <path d="M19.500 3a13.300 13.300 0 0 1 0 26" fill="none" stroke="#237bff" strokeWidth="3.600" />
        </svg>
        Ein
      </button>
      <button className="ml-auto flex items-center gap-[26px] text-[25px] font-medium">
        <span className="pt-1">Optionen</span>
        <GearIcon />
      </button>
    </div>
  );
}

function Stats() {
  return (
    <div className="flex pt-[23px]">
      <div className="flex h-[67px] flex-1 border-r-2 border-[#e4e4e4] pl-9">
        <svg viewBox="0 0 33 34" className="mt-1.5 h-[34px] w-[33px]" fill="none" aria-hidden="true">
          <path d="M5.500 15V8a5.700 5.700 0 0 1 11.400 0v17.500a5.700 5.700 0 0 0 11.400 0V23" stroke="#a3a3a3" strokeWidth="3.800" />
          <circle cx="28" cy="15" r="4" fill="#727272" />
          <path d="M5.500 18L11 32l-5.500-2.500L0 32z" fill="#727272" />
        </svg>
        <div className="ml-9">
          <div className="text-[27px] leading-10 text-[#212121]">44,6 km</div>
          <div className="text-xl leading-6 text-[#757575]">Entfernung</div>
        </div>
      </div>
      <div className="flex h-[67px] flex-1 pl-9">
        <svg viewBox="0 0 34 40" className="mt-0.5 h-10 w-[34px]" fill="none" aria-hidden="true">
          <path d="M11 2h12" stroke="#727272" strokeWidth="4" />
          <circle cx="17" cy="23" r="15" stroke="#727272" strokeWidth="4" />
          <path d="M17 13.500a9.500 9.500 0 0 1 0 19z" fill="#727272" />
        </svg>
        <div className="ml-9">
          <div className="text-[27px] leading-10 text-[#212121]">59 min</div>
          <div className="text-xl leading-6 text-[#757575]">Ankunft um 18:50</div>
        </div>
      </div>
    </div>
  );
}

/* ---------- elevation and slope chart ---------- */

const elevation =
  "0,108 10,107 30,103 50,98 70,94 90,88 110,82 130,77.500 145,77 165,78 182,77 205,70 230,63 255,62 290,60.500 320,61 360,61 385,62 400,59 425,57 440,55 460,51 480,45 500,43 512,43 530,40 550,38 575,37 592,36.500 615,38 650,40 680,39 705,38 720,39";

const BASE = 78.5;
/** Slope sections: start, end, mean height above the zero line, roughness. */
const slopeSections: [number, number, number, number][] = [
  [2, 6, -1, 1], [6, 52, 20, 10], [52, 66, 24, 14], [66, 90, 18, 14], [90, 114, 22, 17], [114, 118, 8, 5], [118, 137, 27, 8],
  [137, 147, 10, 4], [147, 151, -8, 6], [151, 155, -22, 6], [155, 161, 8, 7], [161, 167, -4, 5], [167, 180, 5, 8], [180, 196, 18, 4],
  [196, 218, 22, 6], [218, 238, 14, 2], [238, 255, 16, 4], [255, 263, -2, 3], [263, 297, 6, 4], [299, 385, -2, 3],
  [386, 391, 14, 6], [391, 402, 26, 8], [402, 418, 13, 5], [418, 433, 4, 2], [434, 470, 18, 4], [470, 497, 22, 4],
  [497, 511, -1, 4], [511, 530, 9, 5], [530, 542, 16, 6], [542, 560, 9, 2], [560, 582, 1, 3], [591, 600, -10, 3],
  [600, 622, -2, 5], [622, 633, -9, 8], [633, 655, -1, 9], [655, 664, 4, 5], [664, 672, -18, 12], [672, 690, 17, 4],
  [690, 706, -4, 7], [706, 716, 8, 10], [716, 720, -10, 8],
];
const slopeSpikes: [number, number][] = [
  [26, 32], [59, 42], [80, 40], [92, 40], [108, 41], [154, -28], [159, 15], [197, 30], [239, 22], [298, 23], [299, -2], [400, 37],
  [435, 30], [540, 24], [585, 35], [587, -10], [590, 34], [637, 18], [667, -28], [708, 17],
];

function slopeLine(): string {
  const r = random(2024);
  const pts: [number, number][] = [[0, 0]];
  for (const [a, b, mean, rough] of slopeSections) {
    for (let x = a; x < b; x += 2) pts.push([x, mean + (r() - 0.5) * rough * 1.4]);
  }
  for (const [x, h] of slopeSpikes) pts.push([x, h]);
  pts.sort((p, q) => p[0] - q[0]);
  return pts.map(([x, h]) => `${x.toFixed(1)},${(BASE - h).toFixed(1)}`).join(" ");
}

const slope = slopeLine();
const heightLabels: [string, number][] = [["2500 m", 24], ["2000 m", 44], ["1500 m", 65], ["1000 m", 85], ["500 m", 105]];
const slopeLabels: [string, number][] = [["10 %", 48], ["0 %", 73], ["-10 %", 98]];
const ticks: [string, number, number][] = [["0 km", 0, 2], ["10 km", 162, 3], ["20 km", 323, 2], ["30 km", 485, 3], ["40 km", 646, 2]];

function ElevationChart() {
  return (
    <svg viewBox="0 0 720 150" className="mt-3 block h-auto w-full" role="img" aria-label="Höhenprofil">
      <g transform="translate(0 1)">
        <polygon points={`0,115 ${elevation} 720,115`} fill="#237bff" fillOpacity="0.48" />
        <polygon points={`0,78.500 ${slope} 720,78.500`} fill="#22a53a" fillOpacity="0.5" />
        <g strokeDasharray="10 5" strokeWidth="1">
          <path d="M0 30.500h720M0 50.500h720M0 70.500h720M0 91.500h720M0 111.500h720" stroke="#3a6fc4" />
          <path d="M0 53.500h720M0 78.500h720M0 103.500h720" stroke="#3b8a6b" />
        </g>
        <polyline points={elevation} fill="none" stroke="#3d7de0" strokeWidth="1.500" />
        <polyline points={slope} fill="none" stroke="#2cab47" strokeWidth="1.500" />
        <g fill="#163c7c">
          {ticks.map(([t, x, w]) => (
            <rect key={t} x={x - w / 2} y="90" width={w} height="25" />
          ))}
        </g>
        <g className="fill-[#2a5db0] text-lg">
          {heightLabels.map(([t, y]) => (
            <text key={t} x="90" y={y} textAnchor="end">{t}</text>
          ))}
        </g>
        <g className="fill-[#227a3e] text-lg">
          {slopeLabels.map(([t, y]) => (
            <text key={t} x="691" y={y} textAnchor="end">{t}</text>
          ))}
        </g>
        <g className="fill-[#757575] text-lg">
          {ticks.map(([t, x]) => (
            <text key={t} x={x} y="140" textAnchor="middle">{t}</text>
          ))}
        </g>
      </g>
    </svg>
  );
}

function NavBar() {
  return (
    <nav className="flex h-[90px] items-center justify-between bg-black px-[142px]">
      <button aria-label="Letzte Apps">
        <svg viewBox="0 0 32 32" className="size-8" stroke="#8e8e8e" strokeWidth="3.500" strokeLinecap="round" aria-hidden="true">
          <path d="M4 2v28M16 2v28M28 2v28" />
        </svg>
      </button>
      <button aria-label="Startseite">
        <svg viewBox="0 0 34 34" className="size-[34px]" aria-hidden="true">
          <rect x="2.500" y="2.500" width="29" height="29" rx="9" fill="none" stroke="#8e8e8e" strokeWidth="3.500" />
        </svg>
      </button>
      <button aria-label="Zurück">
        <svg viewBox="0 0 32 32" className="size-8" fill="none" stroke="#8e8e8e" strokeWidth="3.500" strokeLinecap="round" aria-hidden="true">
          <path d="M22 2L7 16l15 14" />
        </svg>
      </button>
    </nav>
  );
}

export default function App() {
  return (
    <div className="flex min-h-screen flex-col bg-[#efefef] font-[Roboto,sans-serif]">
      <header className="relative overflow-hidden">
        <RouteMap />
        <Hud />
        <StatusBar />
      </header>
      <main className="border-b border-[#c2c2c2] bg-white shadow-sm">
        <ModeRow />
        <div className="pt-3">
          <Waypoints />
        </div>
        <OptionsRow />
        <Stats />
        <ElevationChart />
        <div className="px-[30px] pt-5 pb-6">
          <button className="h-[67px] w-full rounded-lg border-2 border-[#cacaca] pt-1 text-[25px] font-medium text-[#2f7be9]">
            Details
          </button>
        </div>
      </main>
      <div className="min-h-24 flex-1" />
      <footer>
        <div className="grid h-[90px] grid-cols-2 text-[25px] font-medium shadow-[0_-2px_6px_rgba(0,0,0,0.3)]">
          <button className="border-r-2 border-[#d3e4fc] bg-white pt-1 text-[#2f7be9]">Verwerfen</button>
          <button className="flex items-center bg-[#237bff] pl-[29px] text-white">
            <svg viewBox="0 0 34 38" className="h-[38px] w-[34px]" aria-hidden="true">
              <path d="M17 0L0 37.500l17-5z" fill="#fff" />
              <path d="M17 0l17 37.500-17-5z" fill="#d0e2ff" />
            </svg>
            <span className="flex-1 pt-1 pr-4 text-center">Start</span>
          </button>
        </div>
        <NavBar />
      </footer>
    </div>
  );
}
